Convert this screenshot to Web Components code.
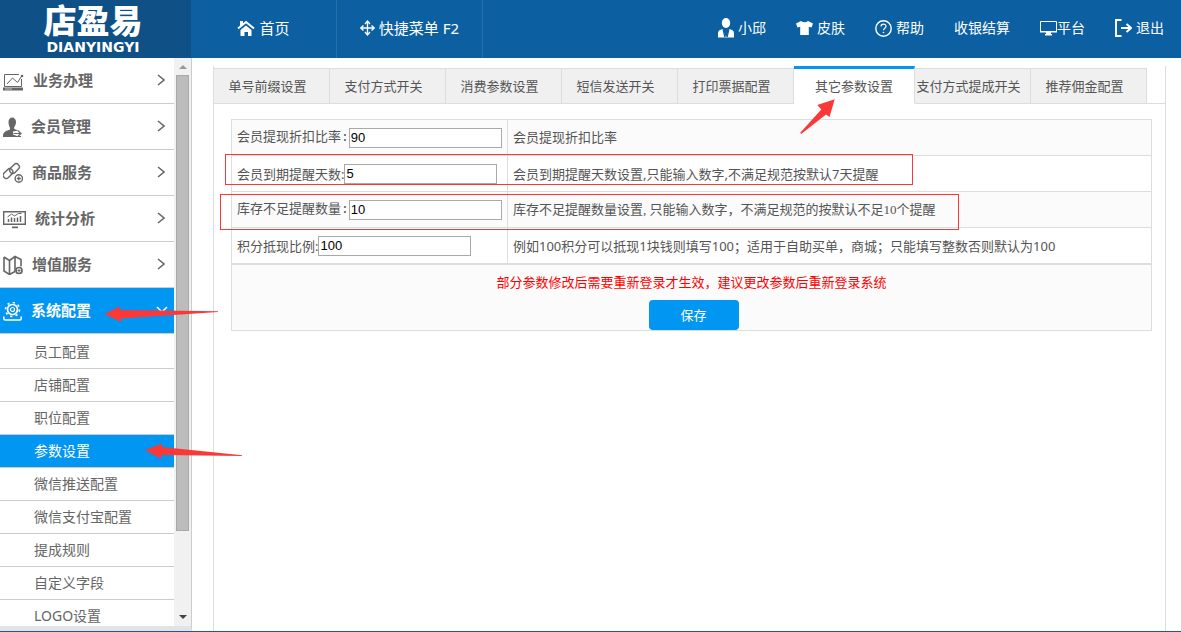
<!DOCTYPE html>
<html lang="zh-CN">
<head>
<meta charset="utf-8">
<title>店盈易 - 其它参数设置</title>
<style>
  html, body { margin: 0; height: 100%; }
  body {
    --blue: #0096f2; --bar: #0c60a1; --line: #ddd; --mark: #fb3838;
    font: 13px/20px "Noto Sans", "Noto Sans CJK SC", sans-serif;
    color: #555; background: #fff; overflow: hidden;
  }
</style>
</head>
<body>
<shop-app></shop-app>
<script>
const define = (name, html, setup) => {
  const template = document.createElement('template');
  template.innerHTML = html;
  customElements.define(name, class extends HTMLElement {
    constructor() {
      super();
      this.attachShadow({ mode: 'open' }).append(template.content.cloneNode(true));
    }
    connectedCallback() { if (setup) setup(this, this.shadowRoot); }
  });
};

const icons = {
  home: [18, 18, '<path d="M1 9.500 9 3l8 6.500" fill="none" stroke="currentColor" stroke-width="2"/><path d="M3 2h3v3L3 7.500zM3.500 11 9 6.500l5.500 4.500v6H11v-4H7.500v4h-4z" fill="currentColor"/>'],
  move: [15, 16, '<path d="M7.500 1.500v13M1 8h13M5 4l2.500-3L10 4M5 12l2.500 3 2.500-3M3.500 5.500.8 8l2.700 2.500M11.500 5.500 14.200 8l-2.700 2.500" fill="none" stroke="currentColor" stroke-width="1.300"/>'],
  user: [16, 20, '<ellipse cx="8" cy="5" rx="4.200" ry="5" fill="currentColor"/><path d="M4.500 11 8 19.500H0V15q0-3 4.500-4zM11.500 11 8 19.500h8V15q0-3-4.500-4z" fill="currentColor"/><path d="m5.200 11.500 1.700 7.500M10.800 11.500l-1.700 7.500" stroke="#0c60a1" stroke-width="1.300"/>'],
  shirt: [17, 14, '<path d="M5 0q3.500 2.500 7 0l5 2.500-1.500 4-2.700-.7V14H4.200V5.800l-2.700.7L0 2.500z" fill="currentColor"/>'],
  help: [17, 17, '<circle cx="8.500" cy="8.500" r="7.700" fill="none" stroke="currentColor" stroke-width="1.400"/><path d="M6 6.600c0-3.400 5-3.200 5-.3 0 1.900-2.500 2-2.500 4" fill="none" stroke="currentColor" stroke-width="1.200"/><circle cx="8.500" cy="12.500" r=".8" fill="currentColor"/>'],
  screen: [17, 15, '<path d="M.5.5h16v10H.5z" fill="none" stroke="currentColor"/><path d="M0 10h17v1.500H0zM6 11h5v2h1v1.500H5V13h1z" fill="currentColor"/>'],
  exit: [17, 18, '<path d="M6.500 1H1v16h5.500M6 9h10M11.500 5 16 9l-4.500 4" fill="none" stroke="currentColor" stroke-width="1.900"/>'],
  laptop: [21, 21, '<path d="M16 4.500H1.500v12h17V9" fill="none" stroke="currentColor"/><path d="m4 14 5.500-6 5 4.500L18 7" fill="none" stroke="currentColor"/><circle cx="19" cy="6" r="1.300" fill="currentColor"/><path d="M0 17.500h20v3H0z" fill="currentColor"/><path d="M2 19h7" stroke="#fff" stroke-width=".6"/>'],
  member: [19, 21, '<path d="M5.500 6c0-6 7.500-6 7.500 0 0 2.500-1 4-1.800 5v2l4.300 1.500-5.500 1v3l4 1.500v1H0c0-5 1.500-5.500 7-7.500v-1.500C6.200 10 5.500 8.500 5.500 6z" fill="currentColor"/><path d="M10.500 17.500h7M15 14.800l3 2.700-3 2.700M12 20.500h6" fill="none" stroke="currentColor" stroke-width="1.200"/>'],
  link: [20, 21, '<g fill="none" stroke="currentColor" stroke-width="1.400"><rect x="6" y="3.500" width="11" height="6.200" rx="3.100" transform="rotate(-45 11.500 6.600)"/><rect x="-.5" y="8.500" width="11" height="6.200" rx="3.100" transform="rotate(-45 5 11.600)"/><circle cx="15.800" cy="16.500" r="3.700"/></g><path d="M15.800 14.500v4M13.800 16.500h4" stroke="currentColor" stroke-width="1.300"/>'],
  stats: [23, 21, '<path d="M.7 3.700h21.600v12.600H.7z" fill="none" stroke="currentColor" stroke-width="1.400"/><path d="M5.500 14v-3M8.500 14V9.500M11.500 14v-4M14.500 14V9.500M17.500 14V8" stroke="currentColor" stroke-width="1.500"/><path d="m4.500 9 4-3 3 2 4-2.500h3" fill="none" stroke="currentColor"/><path d="M9 18.500h6v1.700H9z" fill="currentColor"/>'],
  map: [20, 21, '<path d="m1 3 5.500 3.500L12 2.500l6 3v7M1 3v14l5.500 3.500 5.500-3M6.500 6.500v14M12 2.500v15" fill="none" stroke="currentColor" stroke-width="1.600"/><circle cx="16" cy="16.500" r="3" fill="#fff" stroke="currentColor" stroke-width="1.700"/><path d="M16 15v3M14.500 16.500h3" stroke="currentColor"/>'],
  gear: [19, 21, '<g fill="none" stroke="currentColor"><circle cx="9.500" cy="9.500" r="5" stroke-width="1.700"/><circle cx="9.500" cy="9.500" r="7" stroke-width="1.700" stroke-dasharray="2.200 3.300"/><circle cx="9.500" cy="9.500" r="2" stroke-width="1.200"/><path d="M.8 16.500v2q0 1.500 1.500 1.500h14.400q1.500 0 1.500-1.500v-2" stroke-width="1.500"/></g>'],
  right: [8, 12, '<path d="m1 1 6 5-6 5" fill="none" stroke="currentColor" stroke-width="1.500"/>'],
  down: [12, 8, '<path d="m1 1 5 5 5-5" fill="none" stroke="currentColor" stroke-width="1.500"/>']
};

define('line-icon', `<style>:host{display:block;flex:none}svg{display:block}</style>`, (el, root) => {
  const icon = icons[el.getAttribute('name')];
  if (!icon || root.querySelector('svg')) return;
  const [w, h, body] = icon;
  root.innerHTML += `<svg width="${w}" height="${h}" viewBox="0 0 ${w} ${h}" aria-hidden="true">${body}</svg>`;
});

define('brand-logo', `
<style>
  :host { display: flex; flex-direction: column; align-items: center;
    width: 191px; background: #0f5186; color: #fff; box-sizing: border-box; padding: 3px 5px 0 0; }
  b { font: 900 33px/38px "Liberation Sans", "Noto Sans CJK SC", sans-serif; }
  small { font: bold 14px/12px "DejaVu Sans", sans-serif; }
</style>
<b>店盈易</b><small>DIANYINGYI</small>`);

define('menu-link', `
<style>
  :host { display: flex; }
  a { display: flex; flex: 1; align-items: center; justify-content: center; gap: 4px;
    color: #fff; text-decoration: none; }
  :host([tight]) a { gap: 0; }
</style>
<a href="#"><slot name="icon"></slot><slot></slot></a>`);

define('top-bar', `
<style>
  :host { display: flex; flex: none; height: 58px; background: var(--bar); color: #fff;
    font-size: 14px; line-height: 20px; }
  nav { display: flex; }
  menu-link { padding-bottom: 2px; }
  .main { font-size: 15px; }
  .main menu-link { width: 145px; border-right: 1px solid #2470ab; }
  .tools { margin-left: auto; padding-right: 17px; gap: 30px; }
</style>
<brand-logo></brand-logo>
<nav class="main">
  <menu-link><line-icon slot="icon" name="home"></line-icon>首页</menu-link>
  <menu-link><line-icon slot="icon" name="move"></line-icon>快捷菜单 F2</menu-link>
</nav>
<nav class="tools">
  <menu-link><line-icon slot="icon" name="user"></line-icon>小邱</menu-link>
  <menu-link><line-icon slot="icon" name="shirt"></line-icon>皮肤</menu-link>
  <menu-link><line-icon slot="icon" name="help"></line-icon>帮助</menu-link>
  <menu-link>收银结算</menu-link>
  <menu-link tight><line-icon slot="icon" name="screen"></line-icon>平台</menu-link>
  <menu-link><line-icon slot="icon" name="exit"></line-icon>退出</menu-link>
</nav>`);

define('side-group', `
<style>
  :host { display: block; flex: none; border-bottom: 1px solid #ccc; color: #666; }
  a { display: flex; align-items: center; gap: 9px; height: 43px; padding: 0 9px 2px 3px;
    font-weight: bold; font-size: 15px; color: inherit; text-decoration: none; }
  .lead { padding-top: 2px; }
  .arrow { margin-left: auto; }
  :host([active]) { background: var(--blue); color: #fff; }
  :host([active]) a { padding-right: 6px; }
</style>
<a href="#"><span class="lead"></span><slot></slot><span class="arrow"></span></a>`,
(el, root) => {
  const fill = (cls, name) => {
    const icon = document.createElement('line-icon');
    icon.setAttribute('name', name);
    root.querySelector('.' + cls).replaceChildren(icon);
  };
  fill('lead', el.getAttribute('icon'));
  fill('arrow', el.hasAttribute('active') ? 'down' : 'right');
});
define('side-link', `
<style>
  :host { display: block; flex: none; border-bottom: 1px solid #ccc; }
  a { display: block; padding: 6px 0 6px 34px; font-size: 14px; line-height: 20px;
    color: #666; text-decoration: none; }
  :host([active]) a { background: var(--blue); color: #fff; }
</style>
<a href="#"><slot></slot></a>`);

define('side-menu', `
<style>
  :host { display: flex; flex: none; width: 192px; min-height: 0; box-sizing: border-box;
    border-right: 1px solid #ccc; border-bottom: 5px solid #e3e3e3; }
  nav { flex: 1; display: flex; flex-direction: column; min-width: 0; overflow: hidden; }
  .sub { display: flex; flex-direction: column; padding-top: 2px; }
  .bar { flex: none; display: flex; flex-direction: column; align-items: center; width: 17px; background: #f1f1f1; }
  i { border: 4px solid transparent; border-top: 0; border-bottom-color: #999; margin: 7px 0 6px; }
  .thumb { flex: 455 0 0; width: 11px; border: 1px solid #a8a8a8; background: #bcbcbc; }
  .rest { flex: 84 0 0; }
  .end { border: 4px solid transparent; border-bottom: 0; border-top-color: #444; margin: 0 0 7px; }
</style>
<nav>
  <side-group icon="laptop">业务办理</side-group>
  <side-group icon="member">会员管理</side-group>
  <side-group icon="link">商品服务</side-group>
  <side-group icon="stats">统计分析</side-group>
  <side-group icon="map">增值服务</side-group>
  <side-group icon="gear" active>系统配置</side-group>
  <div class="sub">
    <side-link>员工配置</side-link>
    <side-link>店铺配置</side-link>
    <side-link>职位配置</side-link>
    <side-link active>参数设置</side-link>
    <side-link>微信推送配置</side-link>
    <side-link>微信支付宝配置</side-link>
    <side-link>提成规则</side-link>
    <side-link>自定义字段</side-link>
    <side-link>LOGO设置</side-link>
  </div>
</nav>
<div class="bar" aria-hidden="true"><i></i><div class="thumb"></div><div class="rest"></div><i class="end"></i></div>`);

define('tab-item', `
<style>
  :host { display: block; flex: 0 0 116px; box-sizing: border-box; height: 36px;
    border: solid var(--line); border-width: 1px 1px 1px 0; background: #f0f0f0; }
  button { all: unset; box-sizing: border-box; display: block; width: 100%; height: 100%;
    padding-right: 8px; text-align: center; white-space: nowrap; cursor: pointer; }
  :host([selected]) { flex-basis: 121px; height: 38px; background: #fff;
    border-top: 3px solid var(--blue); border-bottom-color: #fff; }
  :host([selected]) button { padding-right: 0; }
</style>
<button role="tab"><slot></slot></button>`);

define('tab-strip', `
<style>
  :host { display: flex; align-items: flex-end; }
  .fill { flex: 1; border-bottom: 1px solid var(--line); }
</style>
<slot></slot><div class="fill"></div>`);

define('settings-form', `
<style>
  :host { display: block; }
  form { margin: 0; }
  table { width: 100%; border-collapse: collapse; table-layout: fixed; }
  td { height: 35px; padding: 0 5px; border: 1px solid var(--line); white-space: nowrap; }
  td:first-child { width: 30%; box-sizing: border-box; }
  tr:nth-child(odd) { background: #fbfbfb; }
  .field { display: flex; align-items: center; }
  .wide { font-family: "Liberation Mono", "Noto Sans CJK SC", monospace; }
  .serif { font-family: "Liberation Serif", "Noto Sans CJK SC", serif; }
  input { box-sizing: border-box; width: 153px; height: 20px; padding: 0 1px; margin: 0;
    border: 1px solid #a9a9a9; border-radius: 0; background: #fff; color: #000;
    font: 13px/18px "Liberation Sans", sans-serif; outline: 0; }
  footer { display: flex; flex-direction: column; align-items: center; gap: 8px; padding: 7px 0 0 4px;
    border: 1px solid var(--line); background: #fbfbfb; }
  p { margin: 0 4px 0 0; color: #f00; }
  button { width: 90px; height: 30px; padding: 0; border: 0; border-radius: 4px;
    background: var(--blue); color: #fff; font: inherit; }
</style>
<form>
  <table>
    <tr><td><div class="field"><label class="wide" for="rate">会员提现折扣比率:</label><input id="rate" value="90"></div></td>
      <td class="serif">会员提现折扣比率</td></tr>
    <tr><td><div class="field"><label for="days">会员到期提醒天数:</label><input id="days" value="5"></div></td>
      <td>会员到期提醒天数设置,只能输入数字,不满足规范按默认7天提醒</td></tr>
    <tr><td><div class="field"><label class="wide" for="stock">库存不足提醒数量:</label><input id="stock" value="10"></div></td>
      <td class="serif">库存不足提醒数量设置, 只能输入数字，不满足规范的按默认不足10个提醒</td></tr>
    <tr><td><div class="field"><label for="points">积分抵现比例:</label><input id="points" value="100"></div></td>
      <td>例如100积分可以抵现1块钱则填写100；适用于自助买单，商城；只能填写整数否则默认为100</td></tr>
  </table>
  <footer>
    <p>部分参数修改后需要重新登录才生效，建议更改参数后重新登录系统</p>
    <button type="button">保存</button>
  </footer>
</form>`);

define('settings-panel', `
<style>
  :host { display: flex; flex-direction: column; flex: 1; min-width: 0; padding: 8px 15px 0 21px; }
  tab-strip { position: relative; z-index: 1; margin: 0 -13px 0 -17px; }
  section { flex: 1; padding: 0 13px 0 17px; border: solid var(--line); border-width: 0 1px;
    display: flex; flex-direction: column; }
  settings-form { padding-top: 15px; }
</style>
<section>
  <tab-strip role="tablist">
    <tab-item>单号前缀设置</tab-item>
    <tab-item>支付方式开关</tab-item>
    <tab-item>消费参数设置</tab-item>
    <tab-item>短信发送开关</tab-item>
    <tab-item>打印票据配置</tab-item>
    <tab-item selected>其它参数设置</tab-item>
    <tab-item>支付方式提成开关</tab-item>
    <tab-item>推荐佣金配置</tab-item>
  </tab-strip>
  <settings-form></settings-form>
</section>`);

/* Red guide marks laid over the page: two frames and three arrows. */
define('guide-marks', `
<style>
  :host { position: absolute; inset: 0; pointer-events: none; z-index: 5; overflow: hidden; }
  svg { display: block; width: 100%; height: 100%; }
  path { fill: var(--mark); }
  rect { fill: none; stroke: var(--mark); }
</style>
<svg aria-hidden="true">
  <rect x="225.500" y="154.500" width="687" height="30"/>
  <rect x="220.500" y="194.500" width="738" height="35"/>
  <path d="M104.500 314 119.500 306.500 120.500 310 218 311.200v.8L121 318.500v3.500z"/>
  <path d="M145 450 162 443.500v3.500L242 455.200v.8L161 455l.5 4z"/>
  <path d="M834.700 99.300 817.300 105l4 4.500L800 133l1.500.7L826 114.500l3.500 2.500z"/>
</svg>`);

define('shop-app', `
<style>
  :host { display: flex; flex-direction: column; position: relative; height: 100vh; box-sizing: border-box;
    border-bottom: 1px solid var(--bar); }
  main { display: flex; flex: 1; min-height: 0; }
</style>
<top-bar></top-bar>
<main><side-menu></side-menu><settings-panel></settings-panel></main>
<guide-marks></guide-marks>`);
</script>
</body>
</html>
